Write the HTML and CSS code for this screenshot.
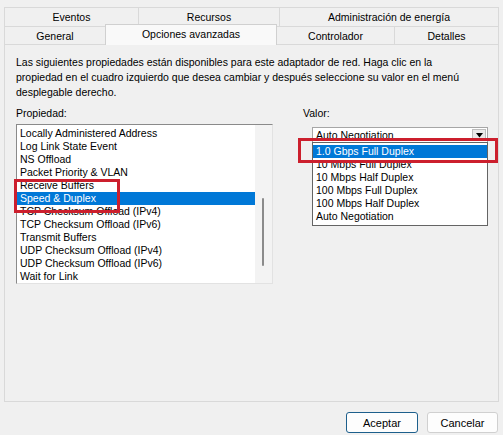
FILE: index.html
```html
<!DOCTYPE html>
<html lang="es">
<head>
<meta charset="utf-8">
<title>Opciones avanzadas</title>
<link rel="stylesheet" href="styles.css">
</head>
<body>
<div class="window">
  <div class="tabs">
    <div class="tabrow row1">
      <div class="tab t-eventos">Eventos</div>
      <div class="tab t-recursos">Recursos</div>
      <div class="tab t-admin">Administración de energía</div>
    </div>
    <div class="tabrow row2">
      <div class="tab t-general">General</div>
      <div class="tab active t-opciones">Opciones avanzadas</div>
      <div class="tab t-control">Controlador</div>
      <div class="tab t-detalles">Detalles</div>
    </div>
  </div>
  <div class="panel">
    <p class="desc">Las siguientes propiedades están disponibles para este adaptador de red. Haga clic en la<br>propiedad en el cuadro izquierdo que desea cambiar y después seleccione su valor en el menú<br>desplegable derecho.</p>
    <div class="cols">
      <div class="col-left">
        <div class="label">Propiedad:</div>
        <div class="listbox">
          <ul class="items">
            <li>Locally Administered Address</li>
            <li>Log Link State Event</li>
            <li>NS Offload</li>
            <li>Packet Priority &amp; VLAN</li>
            <li>Receive Buffers</li>
            <li class="sel">Speed &amp; Duplex</li>
            <li>TCP Checksum Offload (IPv4)</li>
            <li>TCP Checksum Offload (IPv6)</li>
            <li>Transmit Buffers</li>
            <li>UDP Checksum Offload (IPv4)</li>
            <li>UDP Checksum Offload (IPv6)</li>
            <li>Wait for Link</li>
          </ul>
          <div class="scrollbar"><div class="thumb"></div></div>
        </div>
      </div>
      <div class="col-right">
        <div class="label">Valor:</div>
        <div class="combo">
          <span class="combo-text">Auto Negotiation</span>
          <span class="combo-btn">
            <svg width="9" height="5" viewBox="0 0 9 5"><path d="M1 0 H8 L4.5 4.5 Z" fill="#000"/></svg>
          </span>
        </div>
        <ul class="droplist">
          <li class="sel">1.0 Gbps Full Duplex</li>
          <li>10 Mbps Full Duplex</li>
          <li>10 Mbps Half Duplex</li>
          <li>100 Mbps Full Duplex</li>
          <li>100 Mbps Half Duplex</li>
          <li>Auto Negotiation</li>
        </ul>
      </div>
    </div>
  </div>
  <div class="buttons">
    <button class="btn primary">Aceptar</button>
    <button class="btn">Cancelar</button>
  </div>
  <div class="mark mark1"></div>
  <div class="mark mark2"></div>
</div>
</body>
</html>
```
FILE: styles.css
```css
html, body {
  margin: 0;
  padding: 0;
}
body {
  background: #f0f0f0;
  font-family: "Liberation Sans", Arial, sans-serif;
  font-size: 10.5px;
  color: #000;
}
.window {
  position: relative;
  width: 503px;
  height: 435px;
  overflow: hidden;
}
.tabs {
  padding: 7px 4px 0 4px;
}
.tabrow {
  display: flex;
}
.tab {
  box-sizing: border-box;
  display: flex;
  align-items: center;
  justify-content: center;
  border-top: 1px solid #d9d9d9;
  border-left: 1px solid #d9d9d9;
  background: #f0f0f0;
}
.tab:last-child {
  border-right: 1px solid #d9d9d9;
}
.row1 .tab {
  height: 19px;
}
.row2 .tab {
  height: 18px;
}
.t-eventos { width: 134px; }
.t-recursos { width: 141px; }
.t-admin { width: 220px; }
.t-general { width: 101px; }
.t-opciones { width: 172px; }
.t-control { width: 117px; }
.t-detalles { width: 105px; }
.tab.active {
  height: 21px;
  margin-top: -2px;
  margin-bottom: -1px;
  background: #f9f9f9;
  border-top: 1px solid #d0d0d0;
  border-left: 1px solid #d0d0d0;
  border-right: 1px solid #d0d0d0;
  padding-bottom: 2px;
  z-index: 2;
}
.tab.active + .tab {
  border-left: none;
}
.panel {
  box-sizing: border-box;
  margin: 0 4px;
  height: 358px;
  border: 1px solid #d9d9d9;
  background: #f0f0f0;
  padding: 10px 0 0 11px;
}
.desc {
  margin: 0;
  line-height: 15px;
  white-space: nowrap;
}
.cols {
  display: flex;
  margin-top: 6px;
}
.label {
  line-height: 14px;
}
.col-left {
  width: 257px;
}
.col-left .label {
  margin-bottom: 4px;
}
.listbox {
  box-sizing: border-box;
  display: flex;
  width: 257px;
  height: 160px;
  background: #fff;
  border-top: 1px solid #8a8a8a;
  border-left: 1px solid #8a8a8a;
  border-right: 1px solid #e2e2e2;
  border-bottom: 1px solid #e2e2e2;
}
.items {
  list-style: none;
  margin: 0;
  padding: 2px 0 0 0;
  width: 238px;
}
.items li, .droplist li {
  height: 13px;
  line-height: 13px;
  padding-left: 3px;
  white-space: nowrap;
}
.items li.sel, .droplist li.sel {
  background: #0078d7;
  color: #fff;
}
.scrollbar {
  flex: 1;
  background: #f3f3f3;
  padding-top: 73px;
  padding-left: 7px;
}
.thumb {
  width: 2px;
  height: 68px;
  border-radius: 1px;
  background: #8b8b8b;
}
.col-right {
  margin-left: 30px;
}
.col-right .label {
  margin-bottom: 7px;
}
.combo {
  box-sizing: border-box;
  margin-left: 9px;
  width: 176px;
  height: 16px;
  display: flex;
  align-items: center;
  background: #fff;
  border: 1px solid #a6a6a6;
}
.combo-text {
  flex: 1;
  padding-left: 3px;
  line-height: 13px;
}
.combo-btn {
  width: 14px;
  height: 12px;
  margin-right: 1px;
  display: flex;
  align-items: center;
  justify-content: center;
  background: #e9e9e9;
  border: 1px solid #bdbdbd;
  box-sizing: border-box;
}
.droplist {
  box-sizing: border-box;
  list-style: none;
  margin: -1px 0 0 9px;
  padding: 2px 0 2px 0;
  width: 176px;
  background: #fff;
  border: 1px solid #646464;
}
.buttons {
  display: flex;
  justify-content: flex-end;
  gap: 9px;
  padding: 10px 5px 0 0;
}
.btn {
  box-sizing: border-box;
  height: 21px;
  width: 71px;
  font-family: "Liberation Sans", Arial, sans-serif;
  font-size: 11px;
  color: #000;
  background: #fdfdfd;
  border: 1px solid #d0d0d0;
  border-radius: 3px;
  padding: 0;
}
.btn.primary {
  width: 72px;
  border: 1px solid #1d5f8c;
}
.mark {
  position: absolute;
  box-sizing: border-box;
  border: 3px solid #cc1f2d;
}
.mark1 {
  left: 14px;
  top: 179px;
  width: 106px;
  height: 34px;
}
.mark2 {
  left: 298px;
  top: 138px;
  width: 200px;
  height: 25px;
}
```
